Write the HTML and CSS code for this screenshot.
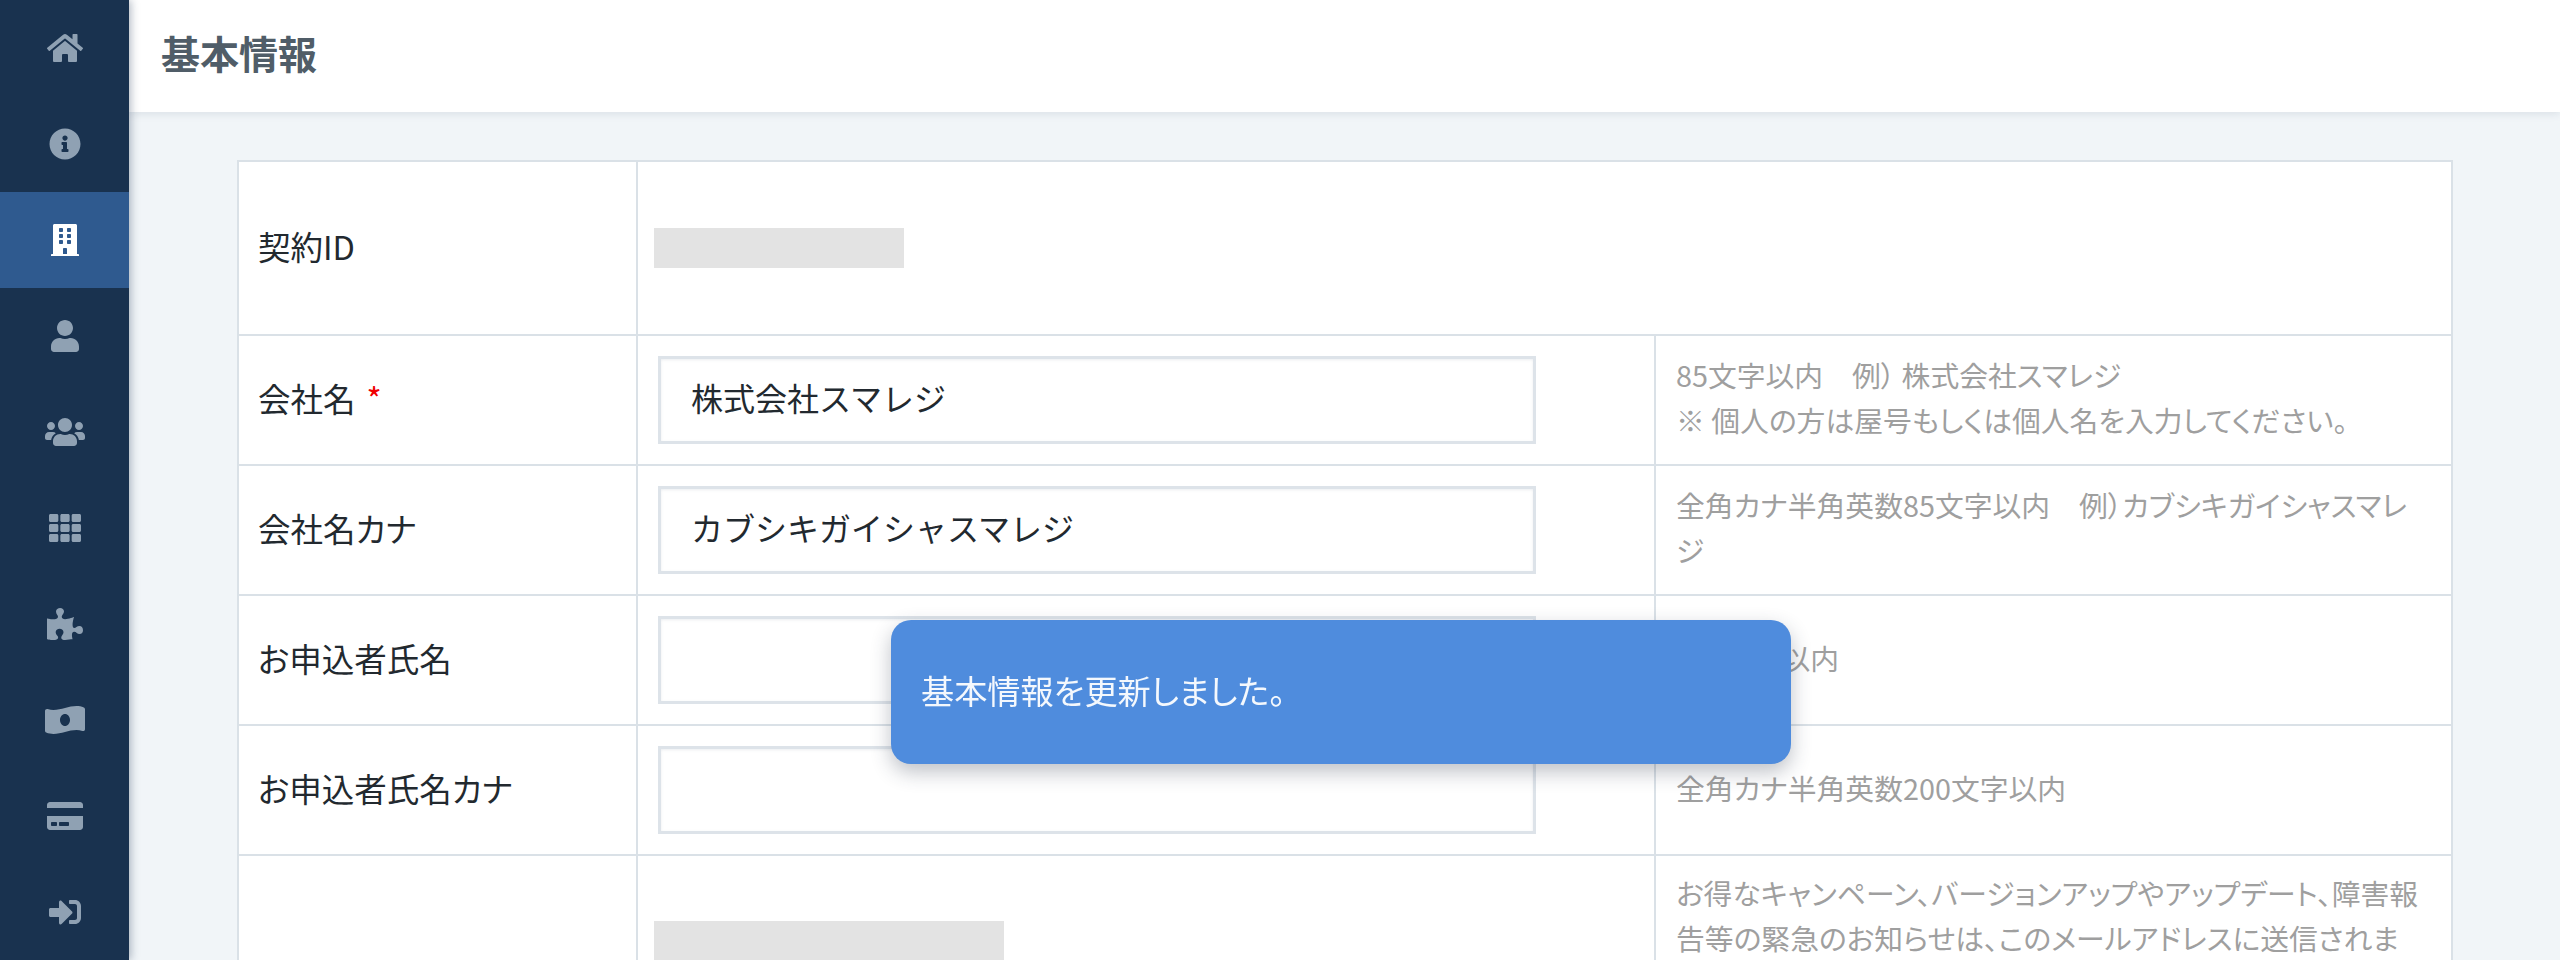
FILE: index.html
```html
<!DOCTYPE html>
<html lang="ja">
<head>
<meta charset="utf-8">
<title>基本情報</title>
<link rel="stylesheet" href="styles.css">
</head>
<body>
<div class="app">
  <nav class="sidebar">
    <a class="nav-item"><svg viewBox="0 0 576 512"><path d="M280.37 148.26L96 300.11V464a16 16 0 0 0 16 16l112.06-.29a16 16 0 0 0 15.92-16V368a16 16 0 0 1 16-16h64a16 16 0 0 1 16 16v95.64a16 16 0 0 0 16 16.05L464 480a16 16 0 0 0 16-16V300L295.67 148.26a12.19 12.19 0 0 0-15.3 0zM571.6 251.47L488 182.56V44.05a12 12 0 0 0-12-12h-56a12 12 0 0 0-12 12v72.61L318.47 43a48 48 0 0 0-61 0L4.34 251.47a12 12 0 0 0-1.6 16.9l25.5 31A12 12 0 0 0 45.15 301l235.22-193.74a12.19 12.19 0 0 1 15.3 0L530.9 301a12 12 0 0 0 16.9-1.6l25.5-31a12 12 0 0 0-1.7-16.93z"/></svg></a>
    <a class="nav-item"><svg viewBox="0 0 512 512"><path d="M256 8C119.043 8 8 119.083 8 256c0 136.997 111.043 248 248 248s248-111.003 248-248C504 119.083 392.957 8 256 8zm0 110c23.196 0 42 18.804 42 42s-18.804 42-42 42-42-18.804-42-42 18.804-42 42-42zm56 254c0 6.627-5.373 12-12 12h-88c-6.627 0-12-5.373-12-12v-24c0-6.627 5.373-12 12-12h12v-64h-12c-6.627 0-12-5.373-12-12v-24c0-6.627 5.373-12 12-12h64c6.627 0 12 5.373 12 12v100h12c6.627 0 12 5.373 12 12v24z"/></svg></a>
    <a class="nav-item is-active"><svg viewBox="0 0 448 512"><path d="M436 480h-20V24c0-13.255-10.745-24-24-24H56C42.745 0 32 10.745 32 24v456H12c-6.627 0-12 5.373-12 12v20h448v-20c0-6.627-5.373-12-12-12zM128 76c0-6.627 5.373-12 12-12h40c6.627 0 12 5.373 12 12v40c0 6.627-5.373 12-12 12h-40c-6.627 0-12-5.373-12-12V76zm0 96c0-6.627 5.373-12 12-12h40c6.627 0 12 5.373 12 12v40c0 6.627-5.373 12-12 12h-40c-6.627 0-12-5.373-12-12v-40zm52 148h-40c-6.627 0-12-5.373-12-12v-40c0-6.627 5.373-12 12-12h40c6.627 0 12 5.373 12 12v40c0 6.627-5.373 12-12 12zm76 160h-64v-84c0-6.627 5.373-12 12-12h40c6.627 0 12 5.373 12 12v84zm64-172c0 6.627-5.373 12-12 12h-40c-6.627 0-12-5.373-12-12v-40c0-6.627 5.373-12 12-12h40c6.627 0 12 5.373 12 12v40zm0-96c0 6.627-5.373 12-12 12h-40c-6.627 0-12-5.373-12-12v-40c0-6.627 5.373-12 12-12h40c6.627 0 12 5.373 12 12v40zm0-96c0 6.627-5.373 12-12 12h-40c-6.627 0-12-5.373-12-12V76c0-6.627 5.373-12 12-12h40c6.627 0 12 5.373 12 12v40z"/></svg></a>
    <a class="nav-item"><svg viewBox="0 0 448 512"><path d="M224 256c70.7 0 128-57.3 128-128S294.7 0 224 0 96 57.3 96 128s57.3 128 128 128zm89.6 32h-16.7c-22.2 10.2-46.9 16-72.9 16s-50.6-5.8-72.9-16h-16.7C60.2 288 0 348.2 0 422.4V464c0 26.5 21.5 48 48 48h352c26.5 0 48-21.5 48-48v-41.6c0-74.2-60.2-134.4-134.4-134.4z"/></svg></a>
    <a class="nav-item"><svg viewBox="0 0 640 512"><path d="M96 224c35.3 0 64-28.7 64-64s-28.7-64-64-64-64 28.7-64 64 28.7 64 64 64zm448 0c35.3 0 64-28.7 64-64s-28.7-64-64-64-64 28.7-64 64 28.7 64 64 64zm32 32h-64c-17.6 0-33.5 7.1-45.1 18.6 40.3 22.1 68.9 62 75.1 109.4h66c17.7 0 32-14.3 32-32v-32c0-35.3-28.7-64-64-64zm-256 0c61.9 0 112-50.1 112-112S381.9 32 320 32 208 82.1 208 144s50.1 112 112 112zm76.8 32h-8.3c-20.8 10-43.9 16-68.5 16s-47.6-6-68.5-16h-8.3C179.6 288 128 339.6 128 403.2V432c0 26.5 21.5 48 48 48h288c26.5 0 48-21.5 48-48v-28.8c0-63.6-51.6-115.2-115.2-115.2zm-223.7-13.4C161.5 263.1 145.6 256 128 256H64c-35.3 0-64 28.7-64 64v32c0 17.7 14.3 32 32 32h65.9c6.3-47.4 34.9-87.3 75.2-109.4z"/></svg></a>
    <a class="nav-item"><svg viewBox="0 0 512 512"><path d="M149.333 56v80c0 13.255-10.745 24-24 24H24c-13.255 0-24-10.745-24-24V56c0-13.255 10.745-24 24-24h101.333c13.255 0 24 10.745 24 24zm181.334 240v-80c0-13.255-10.745-24-24-24H205.333c-13.255 0-24 10.745-24 24v80c0 13.255 10.745 24 24 24h101.333c13.256 0 24.001-10.745 24.001-24zm32-240v80c0 13.255 10.745 24 24 24H488c13.255 0 24-10.745 24-24V56c0-13.255-10.745-24-24-24H386.667c-13.255 0-24 10.745-24 24zm-32 80V56c0-13.255-10.745-24-24-24H205.333c-13.255 0-24 10.745-24 24v80c0 13.255 10.745 24 24 24h101.333c13.256 0 24.001-10.745 24.001-24zm-205.334 56H24c-13.255 0-24 10.745-24 24v80c0 13.255 10.745 24 24 24h101.333c13.255 0 24-10.745 24-24v-80c0-13.255-10.745-24-24-24zM0 376v80c0 13.255 10.745 24 24 24h101.333c13.255 0 24-10.745 24-24v-80c0-13.255-10.745-24-24-24H24c-13.255 0-24 10.745-24 24zm386.667-56H488c13.255 0 24-10.745 24-24v-80c0-13.255-10.745-24-24-24H386.667c-13.255 0-24 10.745-24 24v80c0 13.255 10.745 24 24 24zm0 160H488c13.255 0 24-10.745 24-24v-80c0-13.255-10.745-24-24-24H386.667c-13.255 0-24 10.745-24 24v80c0 13.255 10.745 24 24 24zM181.333 376v80c0 13.255 10.745 24 24 24h101.333c13.255 0 24-10.745 24-24v-80c0-13.255-10.745-24-24-24H205.333c-13.255 0-24 10.745-24 24z"/></svg></a>
    <a class="nav-item"><svg viewBox="0 0 576 512"><path d="M519.442 288.651c-41.519 0-59.5 31.593-82.058 31.593C377.409 320.244 432 144 432 144s-196.288 80-196.288-3.297c0-35.827 36.288-46.25 36.288-85.985C272 19.216 243.885 0 210.539 0c-34.654 0-66.366 18.891-66.366 56.346 0 41.364 31.711 59.277 31.711 81.75C175.885 207.719 0 166.758 0 166.758v333.237s178.635 41.047 178.635-28.662c0-22.473-40-40.107-40-81.471 0-37.456 29.25-56.346 63.577-56.346 33.673 0 61.788 19.216 61.788 54.717 0 39.735-36.288 50.158-36.288 85.985 0 60.803 129.675 25.73 181.23 25.73 0 0-34.725-120.101 25.827-120.101 35.962 0 46.423 36.152 86.308 36.152C556.712 416 576 387.99 576 354.443c0-34.199-18.962-65.792-56.558-65.792z"/></svg></a>
    <a class="nav-item"><svg viewBox="0 0 640 512"><path d="M621.16 54.46C582.37 38.19 543.55 32 504.75 32c-123.17-.01-246.33 62.34-369.5 62.34-30.89 0-61.76-3.92-92.65-13.72-3.47-1.1-6.95-1.62-10.35-1.62C15.04 79 0 92.32 0 110.81v317.26c0 12.63 7.23 24.6 18.84 29.46C57.63 473.81 96.45 480 135.25 480c123.17 0 246.34-62.35 369.51-62.35 30.89 0 61.76 3.92 92.65 13.72 3.47 1.1 6.95 1.62 10.35 1.62 17.21 0 32.25-13.32 32.25-31.81V83.93c-.01-12.64-7.24-24.6-18.85-29.47zM320 352c-44.19 0-80-42.99-80-96 0-53.02 35.82-96 80-96s80 42.98 80 96c0 53.03-35.83 96-80 96z"/></svg></a>
    <a class="nav-item"><svg viewBox="0 0 576 512"><path d="M0 432c0 26.5 21.5 48 48 48h480c26.5 0 48-21.5 48-48V256H0v176zm192-68c0-6.6 5.4-12 12-12h136c6.6 0 12 5.4 12 12v40c0 6.6-5.4 12-12 12H204c-6.6 0-12-5.4-12-12v-40zm-128 0c0-6.6 5.4-12 12-12h72c6.6 0 12 5.4 12 12v40c0 6.6-5.4 12-12 12H76c-6.6 0-12-5.4-12-12v-40zM576 80v48H0V80c0-26.5 21.5-48 48-48h480c26.5 0 48 21.5 48 48z"/></svg></a>
    <a class="nav-item"><svg viewBox="0 0 512 512"><path d="M416 448h-84c-6.6 0-12-5.4-12-12v-40c0-6.6 5.4-12 12-12h84c17.7 0 32-14.3 32-32V160c0-17.7-14.3-32-32-32h-84c-6.6 0-12-5.4-12-12V76c0-6.6 5.4-12 12-12h84c53 0 96 43 96 96v192c0 53-43 96-96 96zm-47-201L201 79c-15-15-41-4.5-41 17v96H24c-13.3 0-24 10.7-24 24v96c0 13.3 10.7 24 24 24h136v96c0 21.5 26 32 41 17l168-168c9.3-9.4 9.3-24.6 0-34z"/></svg></a>
  </nav>
  <main class="main">
    <header class="page-header"><h1 class="page-title">基本情報</h1></header>
    <div class="content">
      <table class="form-table">
        <colgroup><col class="col-label"><col class="col-field"><col class="col-hint"></colgroup>
        <tr class="row-id">
          <th class="cell-label">契約ID</th>
          <td class="cell-masked" colspan="2"><span class="mask mask-id"></span></td>
        </tr>
        <tr class="row-field">
          <th class="cell-label">会社名<span class="required">*</span></th>
          <td class="cell-field"><input class="text-input" type="text" value="株式会社スマレジ"></td>
          <td class="cell-hint">85文字以内　例） 株式会社スマレジ<br>※ 個人の方は屋号もしくは個人名を入力してください。</td>
        </tr>
        <tr class="row-field">
          <th class="cell-label">会社名カナ</th>
          <td class="cell-field"><input class="text-input" type="text" value="カブシキガイシャスマレジ"></td>
          <td class="cell-hint">全角カナ半角英数85文字以内　例）カブシキガイシャスマレジ</td>
        </tr>
        <tr class="row-field">
          <th class="cell-label">お申込者氏名</th>
          <td class="cell-field"><input class="text-input" type="text"></td>
          <td class="cell-hint">200文字以内</td>
        </tr>
        <tr class="row-field">
          <th class="cell-label">お申込者氏名カナ</th>
          <td class="cell-field"><input class="text-input" type="text"></td>
          <td class="cell-hint">全角カナ半角英数200文字以内</td>
        </tr>
        <tr class="row-mail">
          <th class="cell-label"></th>
          <td class="cell-masked"><span class="mask mask-mail"></span></td>
          <td class="cell-hint">お得なキャンペーン、バージョンアップやアップデート、障害報告等の緊急のお知らせは、このメールアドレスに送信されま</td>
        </tr>
      </table>
    </div>
  </main>
</div>
<div class="toast">基本情報を更新しました。</div>
</body>
</html>
```
FILE: styles.css
```css
* { box-sizing: border-box; }
html, body { margin: 0; height: 100%; overflow: hidden; }
body {
  font-family: "Noto Sans CJK JP", "Noto Sans", sans-serif;
  color: #22292f;
  background: #f1f5f8;
}
.app { display: flex; height: 960px; overflow: hidden; }
.sidebar {
  width: 129px;
  flex: none;
  display: flex;
  flex-direction: column;
  background: #19324f;
  box-shadow: 2px 0 8px rgba(40, 60, 90, .35);
  z-index: 3;
}
.nav-item {
  height: 96px;
  flex: none;
  display: flex;
  align-items: center;
  justify-content: center;
}
.nav-item svg { height: 32px; width: auto; fill: #8fa1b3; display: block; }
.nav-item.is-active { background: #2f5a8f; }
.nav-item.is-active svg { fill: #fff; }
.main { flex: 1; min-width: 0; display: flex; flex-direction: column; }
.page-header {
  height: 112px;
  flex: none;
  display: flex;
  align-items: center;
  padding: 0 32px 8px;
  background: #fff;
  box-shadow: 0 2px 8px rgba(60, 80, 110, .12);
  z-index: 2;
}
.page-title { margin: 0; font-size: 39px; font-weight: 700; color: #505d68; line-height: 1; }
.content { padding: 48px 107px 0 108px; }
.form-table {
  width: 100%;
  table-layout: fixed;
  border-collapse: collapse;
  background: #fff;
}
.col-label { width: 399px; }
.col-field { width: 1018px; }
.form-table th, .form-table td { border: 2px solid #dae1e7; padding: 0; vertical-align: middle; }
.row-id { height: 174px; }
.row-field { height: 130px; }
.row-mail { height: 260px; }
.cell-label {
  padding: 0 0 6px 19px !important;
  text-align: left;
  font-size: 32.5px;
  font-weight: 400;
  font-feature-settings: "palt";
}
.required { color: #f00000; margin-left: 11px; }
.cell-masked { padding-left: 16px !important; }
.mask { display: block; height: 40px; background: #e3e3e3; }
.mask-id { width: 250px; }
.mask-mail { width: 350px; }
.row-mail .cell-masked { vertical-align: top; padding-top: 65px !important; }
.cell-field { padding: 0 118px 0 20px !important; }
.text-input {
  display: block;
  width: 100%;
  height: 88px;
  padding: 0 30px 6px;
  border: 3px solid #dde3e9;
  border-radius: 0;
  outline: none;
  background: #fff;
  box-shadow: inset 0 1px 3px rgba(60, 80, 110, .1);
  font: 400 32px "Noto Sans CJK JP", sans-serif;
  color: #22292f;
}
.cell-hint {
  padding: 0 28px 6px 20px !important;
  font-size: 28.8px;
  line-height: 45px;
  color: #9f9f9f;
  font-feature-settings: "palt";
}
.row-mail .cell-hint { vertical-align: top; padding-top: 14px !important; }
.toast {
  position: fixed;
  left: 891px;
  top: 620px;
  width: 900px;
  height: 144px;
  display: flex;
  align-items: center;
  padding: 0 30px 6px;
  border-radius: 20px;
  background: #4f8cdd;
  color: #f4f8fd;
  font-size: 33.2px;
  font-feature-settings: "palt";
  box-shadow: 0 8px 20px rgba(40, 50, 70, .3);
  z-index: 10;
}
```
